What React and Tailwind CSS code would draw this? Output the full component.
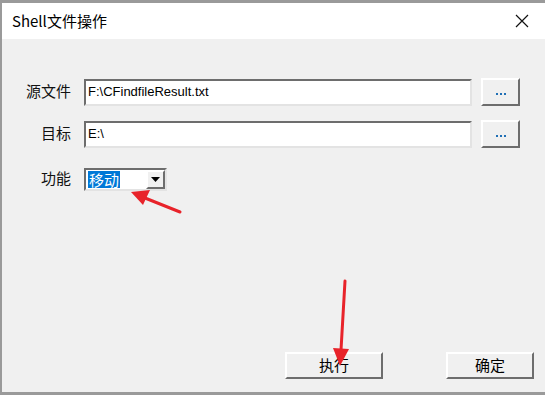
import React from 'react';

const cjk = { fontFamily: '"Microsoft YaHei", "Noto Sans CJK SC", sans-serif' };
const mono = { fontFamily: '"Liberation Sans", Tahoma, sans-serif', fontSize: '13px' };

const Sunken = ({ className = '', children }) => (
  <div className={`border-t-2 border-l-2 border-t-[#6d6d6d] border-l-[#6d6d6d] border-b-2 border-r-2 border-b-[#e3e3e3] border-r-[#e3e3e3] bg-white ${className}`}>
    {children}
  </div>
);

const Raised = ({ className = '', children }) => (
  <button className={`border-t-2 border-l-2 border-t-white border-l-white border-b-2 border-r-2 border-b-[#6d6d6d] border-r-[#6d6d6d] bg-[#f0f0f0] flex items-center justify-center ${className}`}>
    {children}
  </button>
);

const Dots = () => (
  <span className="flex gap-[2px] items-end mt-[4px]">
    <span className="w-[2px] h-[2px] bg-[#1f6fb5]" />
    <span className="w-[2px] h-[2px] bg-[#1f6fb5]" />
    <span className="w-[2px] h-[2px] bg-[#1f6fb5]" />
  </span>
);

export default function App() {
  return (
    <div className="w-[545px] h-[395px] bg-[#9a9a9a] pt-[3px] pl-[2px] pb-[3px] flex flex-col overflow-hidden relative">
      <div className="flex-1 flex flex-col bg-[#f0f0f0]">
        {/* title bar */}
        <div className="h-[36px] bg-white flex items-center justify-between pl-[10px] pr-[14px]">
          <span className="text-[15px] text-black" style={cjk}>Shell文件操作</span>
          <svg width="16" height="16" viewBox="0 0 16 16" className="mr-[1px]">
            <path d="M2 2 L14 14 M14 2 L2 14" stroke="#111" strokeWidth="1.2" />
          </svg>
        </div>

        {/* form */}
        <div className="flex flex-col pt-[39px]">
          <div className="flex items-center h-[28px]">
            <span className="w-[69px] text-right text-[15px] text-[#111] -mt-[2px]" style={cjk}>源文件</span>
            <Sunken className="ml-[13px] w-[388px] h-[27px] flex items-center pl-[2px]">
              <span className="text-black" style={mono}>F:\CFindfileResult.txt</span>
            </Sunken>
            <Raised className="ml-[9px] w-[39px] h-[28px]"><Dots /></Raised>
          </div>

          <div className="flex items-center h-[28px] mt-[14px]">
            <span className="w-[69px] text-right text-[15px] text-[#111] -mt-[2px]" style={cjk}>目标</span>
            <Sunken className="ml-[13px] w-[388px] h-[27px] flex items-center pl-[2px]">
              <span className="text-black" style={mono}>E:\</span>
            </Sunken>
            <Raised className="ml-[9px] w-[39px] h-[28px]"><Dots /></Raised>
          </div>

          <div className="flex items-center h-[23px] mt-[20px]">
            <span className="w-[69px] text-right text-[15px] text-[#111] -mt-[2px]" style={cjk}>功能</span>
            <Sunken className="ml-[13px] w-[83px] h-[23px] flex items-center pl-[2px]">
              <span className="bg-[#0078d7] text-white text-[15px] leading-[17px] px-[1px] h-[17px] flex items-center" style={{ fontFamily: '"Noto Sans CJK SC", sans-serif' }}>移动</span>
              <span className="flex-1" />
              <Raised className="w-[19px] h-[19px]">
                <svg width="9" height="5" viewBox="0 0 9 5"><path d="M0 0 H9 L4.5 5 Z" fill="#000" /></svg>
              </Raised>
            </Sunken>
          </div>
        </div>

        <div className="flex-1" />

        {/* buttons */}
        <div className="flex items-center pb-[13px]">
          <Raised className="ml-[283px] w-[98px] h-[27px]">
            <span className="text-[15px] text-black" style={{ fontFamily: '"Noto Sans CJK SC", sans-serif' }}>执行</span>
          </Raised>
          <Raised className="ml-[63px] w-[88px] h-[27px]">
            <span className="text-[15px] text-black" style={{ fontFamily: '"Noto Sans CJK SC", sans-serif' }}>确定</span>
          </Raised>
        </div>
      </div>

      {/* annotation arrows */}
      <svg className="absolute inset-0 pointer-events-none" width="545" height="395" viewBox="0 0 545 395">
        <line x1="180" y1="212" x2="145" y2="198" stroke="#e8232a" strokeWidth="3" strokeLinecap="round" />
        <polygon points="131,192 150,190 143,205" fill="#e8232a" />
        <line x1="345" y1="281" x2="341" y2="350" stroke="#e8232a" strokeWidth="3" strokeLinecap="round" />
        <polygon points="333,348 349,349 340,366" fill="#e8232a" />
      </svg>
    </div>
  );
}
